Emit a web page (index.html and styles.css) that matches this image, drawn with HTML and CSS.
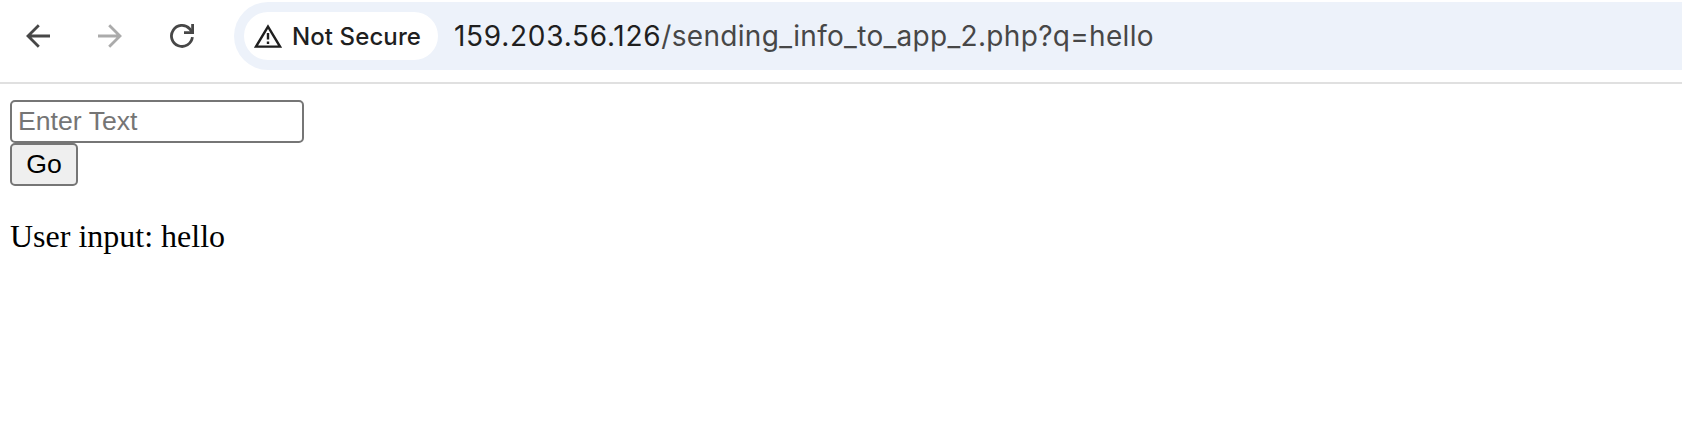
FILE: index.html
```html
<!DOCTYPE html>
<html lang="en">
<head>
<meta charset="utf-8">
<title>Sending info to app</title>
<link rel="stylesheet" href="styles.css">
</head>
<body>
<header class="toolbar">
  <nav class="nav">
    <svg class="icon" viewBox="0 0 24 24"><path d="M24 12H2M12.8 1.2 2 12l10.8 10.8"/></svg>
    <svg class="icon icon-disabled" viewBox="0 0 24 24"><path d="M0 12h22M11.2 1.2 22 12 11.2 22.8"/></svg>
    <svg class="icon" viewBox="0 0 24 24"><path d="M22.4 13.2A10.5 10.5 0 1 1 19.6 4.7L22 8"/><path d="M22.6 0v8.6H14"/></svg>
  </nav>
  <div class="omnibox">
    <div class="chip">
      <svg class="warning" viewBox="0 0 28 24"><path d="M14 2.6 26 22.6H2Z"/><path d="M14 9v6.6M14 17.6v2.4"/></svg>
      <span class="chip-label">Not Secure</span>
    </div>
    <div class="url"><span class="host">159.203.56.126</span><span class="path">/sending_info_to_app_2.php?q=hello</span></div>
  </div>
</header>
<main class="page">
  <form class="form">
    <input class="field" type="text" placeholder="Enter Text">
    <button class="go" type="button">Go</button>
  </form>
  <p class="result">User input: hello</p>
</main>
</body>
</html>
```
FILE: styles.css
```css
* { box-sizing: border-box; }
body { margin: 0; background: #fff; overflow: hidden; }

.toolbar {
  display: flex;
  height: 84px;
  padding: 2px 0 12px 26px;
  border-bottom: 2px solid #e0e0e0;
  font-family: Inter, sans-serif;
}
.nav {
  display: flex;
  align-items: center;
  gap: 48px;
  width: 208px;
}
.icon {
  width: 24px;
  height: 24px;
  flex: none;
  fill: none;
  stroke: #474747;
  stroke-width: 2.8;
}
.icon-disabled { stroke: #ababab; }

.omnibox {
  display: flex;
  align-items: center;
  flex: 1;
  height: 68px;
  padding-left: 10px;
  border-radius: 34px 0 0 34px;
  background: #edf2fa;
  white-space: nowrap;
}
.chip {
  display: flex;
  align-items: center;
  width: 194px;
  height: 48px;
  padding-left: 10px;
  border-radius: 24px;
  background: #fff;
}
.warning {
  width: 28px;
  height: 24px;
  fill: none;
  stroke: #1f1f1f;
  stroke-width: 2.4;
}
.chip-label {
  margin-left: 10px;
  color: #1f1f1f;
  font-size: 24px;
  font-weight: 500;
  letter-spacing: 0.1px;
}
.url { margin-left: 16px; font-size: 28px; }
.host { color: #1f1f1f; letter-spacing: 0.73px; }
.path { color: #474747; letter-spacing: 0.31px; }

.page { padding: 16px 10px; }
.form {
  display: flex;
  flex-direction: column;
  align-items: flex-start;
}
.field, .go {
  margin: 0;
  border: 2px solid #767676;
  border-radius: 5px;
  font: 26.67px "Liberation Sans", Arial, sans-serif;
}
.field {
  width: 294px;
  height: 43px;
  padding: 0 6px;
  background: #fff;
}
.field::placeholder { color: #757575; opacity: 1; }
.go {
  width: 68px;
  height: 43px;
  padding: 0;
  background: #efefef;
  color: #000;
}
.result {
  margin: 32px 0 0;
  color: #000;
  font: 32px/37px "Liberation Serif", "Times New Roman", serif;
}
```
